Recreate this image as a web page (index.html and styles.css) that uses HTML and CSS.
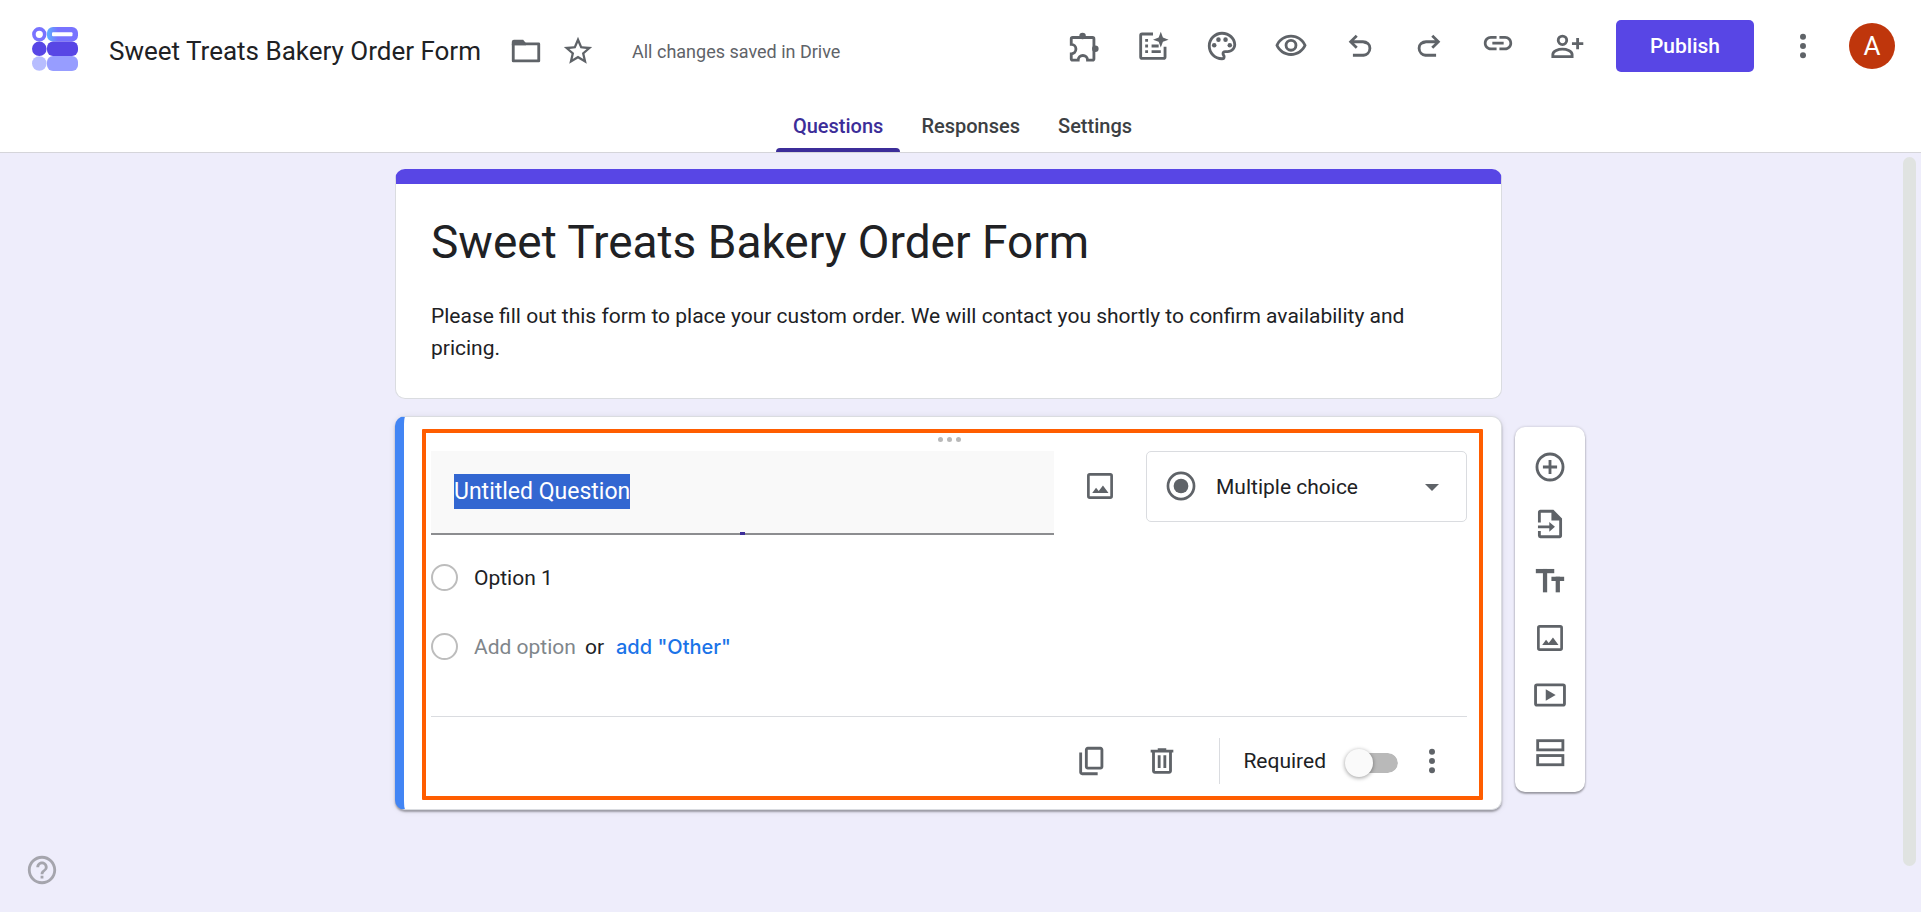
FILE: index.html
```html
<!DOCTYPE html>
<html lang="en">
<head>
    <meta charset="UTF-8">
    <meta name="viewport" content="width=device-width, initial-scale=1.0">
    <title>Sweet Treats Bakery Order Form</title>
    <link rel="stylesheet" href="styles.css">
</head>
<body>
    <header class="header">
        <div class="top-bar">
            <div class="file-info">
                <a href="#" class="logo" aria-label="Forms home">
                    <svg viewBox="0 0 46 44" width="46" height="44">
                        <defs>
                            <linearGradient id="pill">
                                <stop offset="0" stop-color="#5cb3ff"/>
                                <stop offset="0.35" stop-color="#7873ff"/>
                            </linearGradient>
                        </defs>
                        <circle cx="7.3" cy="7.3" r="5.4" fill="none" stroke="#7873ff" stroke-width="3.6"/>
                        <rect x="15" width="31" height="14.5" rx="6" fill="url(#pill)"/>
                        <rect x="20" y="5.2" width="20.5" height="4" rx="1" fill="#fff"/>
                        <circle cx="7.3" cy="21.8" r="7.3" fill="#5846e5"/>
                        <rect x="15" y="14.5" width="31" height="14.5" rx="6" fill="#5846e5"/>
                        <circle cx="7.3" cy="36.5" r="7.3" fill="#b7bdff"/>
                        <rect x="15" y="29" width="31" height="15" rx="6" fill="#979dff"/>
                    </svg>
                </a>
                <span class="file-name">Sweet Treats Bakery Order Form</span>
                <button class="file-btn" aria-label="Move to folder">
                    <svg class="icon" viewBox="0 0 24 24">
                        <path d="M3 7h18v12H3z" fill="none" stroke="currentColor" stroke-width="2" stroke-linejoin="round"/>
                        <path d="M2 8V5.500A1.500 1.500 0 0 1 3.500 4H10l2 2.500V8z"/>
                    </svg>
                </button>
                <button class="file-btn" aria-label="Star">
                    <svg class="icon" viewBox="0 0 24 24"><path d="M22 9.240l-7.190-.620L12 2 9.190 8.630 2 9.240l5.460 4.730L5.820 21 12 17.270 18.180 21l-1.630-7.030L22 9.240zM12 15.400l-3.760 2.270 1-4.280-3.320-2.880 4.380-.380L12 6.100l1.710 4.040 4.380.380-3.320 2.880 1 4.280L12 15.400z"/></svg>
                </button>
                <span class="save-state">All changes saved in Drive</span>
            </div>

            <div class="actions">
                <button class="action-btn" aria-label="Add-ons">
                    <svg class="icon" viewBox="0 0 24 24">
                        <path d="M4 6h14a1 1 0 0 1 1 1v14a1 1 0 0 1-1 1h-3.500a3.300 3.300 0 0 0-6.600 0H4a1 1 0 0 1-1-1v-3.500a3.300 3.300 0 0 0 0-6.600V7a1 1 0 0 1 1-1z" fill="none" stroke="currentColor" stroke-width="2"/>
                        <circle cx="11" cy="5" r="2.300"/><circle cx="20" cy="14" r="2.300"/>
                    </svg>
                </button>
                <button class="action-btn" aria-label="Help me create">
                    <svg class="icon" viewBox="0 0 24 24">
                        <path d="M12 3.500H4.300a1 1 0 0 0-1 1v15.200a1 1 0 0 0 1 1h15.200a1 1 0 0 0 1-1V12.500" fill="none" stroke="currentColor" stroke-width="2"/>
                        <path d="M17.500 2l1.500 4 4 1.500L19 9l-1.500 4L16 9l-4-1.500L16 6z"/>
                        <path d="M6.500 7h2v2h-2zM6.500 11h2v2h-2zM6.500 15h2v2h-2zM11 11h5v2h-5zM11 15h6.500v2H11z"/>
                    </svg>
                </button>
                <button class="action-btn" aria-label="Customize theme">
                    <svg class="icon" viewBox="0 0 24 24">
                        <path d="M12 22C6.490 22 2 17.510 2 12S6.490 2 12 2s10 4.040 10 9c0 3.310-2.690 6-6 6h-1.770c-.280 0-.5.220-.5.5 0 .120.050.230.130.330.410.470.640 1.060.640 1.670A2.500 2.500 0 0 1 12 22zm0-18c-4.410 0-8 3.590-8 8s3.590 8 8 8c.280 0 .5-.220.5-.5a.540.540 0 0 0-.140-.350c-.410-.460-.630-1.050-.630-1.650a2.500 2.500 0 0 1 2.500-2.500H16c2.210 0 4-1.790 4-4 0-3.860-3.590-7-8-7z"/>
                        <circle cx="6.500" cy="11.500" r="1.600"/><circle cx="9.500" cy="7.500" r="1.600"/><circle cx="14.500" cy="7.500" r="1.600"/><circle cx="17.500" cy="11.500" r="1.600"/>
                    </svg>
                </button>
                <button class="action-btn" aria-label="Preview">
                    <svg class="icon" viewBox="0 0 24 24">
                        <path d="M12 6c3.790 0 7.170 2.130 8.820 5.500C19.170 14.870 15.790 17 12 17s-7.170-2.130-8.820-5.500C4.830 8.130 8.210 6 12 6m0-2C7 4 2.730 7.110 1 11.500 2.730 15.890 7 19 12 19s9.270-3.110 11-7.500C21.270 7.110 17 4 12 4z"/>
                        <circle cx="12" cy="11.500" r="3.500" fill="none" stroke="currentColor" stroke-width="2"/>
                    </svg>
                </button>
                <button class="action-btn" aria-label="Undo">
                    <svg class="icon" viewBox="0 0 24 24"><path d="M7 19.500v-2h7.100q1.575 0 2.738-1T18 13.500 16.838 11 14.100 10H7.800l2.600 2.600L9 14 4 9l5-5 1.400 1.400L7.800 8h6.300q2.425 0 4.163 1.575T20 13.500t-1.737 4.300T14.100 19.500z"/></svg>
                </button>
                <button class="action-btn" aria-label="Redo">
                    <svg class="icon" viewBox="0 0 24 24"><path transform="matrix(-1 0 0 1 24 0)" d="M7 19.500v-2h7.100q1.575 0 2.738-1T18 13.500 16.838 11 14.100 10H7.800l2.600 2.600L9 14 4 9l5-5 1.400 1.400L7.800 8h6.300q2.425 0 4.163 1.575T20 13.500t-1.737 4.300T14.100 19.500z"/></svg>
                </button>
                <button class="action-btn" aria-label="Copy link">
                    <svg class="icon" viewBox="0 2 24 24"><path d="M3.900 12c0-1.710 1.390-3.100 3.100-3.100h4V7H7c-2.760 0-5 2.240-5 5s2.240 5 5 5h4v-1.900H7c-1.710 0-3.100-1.390-3.100-3.100zM8 13h8v-2H8v2zm9-6h-4v1.900h4c1.710 0 3.100 1.390 3.100 3.100s-1.390 3.100-3.100 3.100h-4V17h4c2.760 0 5-2.240 5-5s-2.240-5-5-5z"/></svg>
                </button>
                <button class="action-btn" aria-label="Add collaborators">
                    <svg class="icon" viewBox="0 0 24 24">
                        <g fill="none" stroke="currentColor" stroke-width="2">
                            <circle cx="8.800" cy="8" r="3"/>
                            <path d="M2 19.500V18c0-2.500 4-3.800 6.800-3.800s6.800 1.300 6.800 3.800v1.500z"/>
                            <path d="M19.500 6.300v8M15.500 10.300h8"/>
                        </g>
                    </svg>
                </button>
                <button class="publish-btn">Publish</button>
                <button class="more-btn" aria-label="More">
                    <svg class="icon" viewBox="0 0 24 24"><circle cx="12" cy="5.500" r="2.100"/><circle cx="12" cy="12" r="2.100"/><circle cx="12" cy="18.500" r="2.100"/></svg>
                </button>
                <button class="avatar" aria-label="Account">A</button>
            </div>
        </div>

        <nav class="tabs">
            <a href="#questions" class="tab active">Questions</a>
            <a href="#responses" class="tab">Responses</a>
            <a href="#settings" class="tab">Settings</a>
        </nav>
    </header>

    <main class="editor">
        <section class="title-card">
            <h1>Sweet Treats Bakery Order Form</h1>
            <p>Please fill out this form to place your custom order. We will contact you shortly to confirm availability and pricing.</p>
        </section>

        <section class="question-card">
            <div class="drag-handle"><i></i><i></i><i></i></div>

            <div class="question-row">
                <div class="question-field">
                    <textarea id="question" rows="1" aria-label="Question" spellcheck="false">Untitled Question</textarea>
                </div>
                <button class="image-btn" aria-label="Add image">
                    <svg class="icon" viewBox="0 0 24 24">
                        <rect x="3.800" y="3.800" width="16.400" height="16.400" rx="1" fill="none" stroke="currentColor" stroke-width="1.900"/>
                        <path d="M6.500 17l2.700-3.800 1.900 2.400 3-4 3.900 5.400z"/>
                    </svg>
                </button>
                <div class="type-select">
                    <svg class="icon type-icon" viewBox="0 0 24 24">
                        <circle cx="12" cy="12" r="9.200" fill="none" stroke="currentColor" stroke-width="1.900"/>
                        <circle cx="12" cy="12" r="5.200"/>
                    </svg>
                    <select aria-label="Question type">
                        <option>Multiple choice</option>
                        <option>Checkboxes</option>
                        <option>Dropdown</option>
                    </select>
                    <svg class="arrow" viewBox="0 0 14 7" width="14" height="7"><path d="M0 0h14L7 7z"/></svg>
                </div>
            </div>

            <div class="option">
                <input type="radio" name="option" id="opt1" disabled>
                <label for="opt1">Option 1</label>
            </div>
            <div class="option">
                <input type="radio" name="option" aria-label="New option" disabled>
                <button class="add-option">Add option</button>
                <span class="or">or</span>
                <button class="add-other">add "Other"</button>
            </div>

            <div class="question-footer">
                <button class="foot-btn" aria-label="Duplicate">
                    <svg class="icon" viewBox="0 0 24 24"><path d="M9 18q-.825 0-1.412-.587T7 16V4q0-.825.587-1.412T9 2h9q.825 0 1.413.588T20 4v12q0 .825-.587 1.413T18 18zm0-2h9V4H9zm-4 6q-.825 0-1.412-.587T3 20V6h2v14h11v2z"/></svg>
                </button>
                <button class="foot-btn" aria-label="Delete">
                    <svg class="icon" viewBox="0 0 24 24"><path d="M7 21q-.825 0-1.412-.587T5 19V6H4V4h5V3h6v1h5v2h-1v13q0 .825-.587 1.413T17 21zM17 6H7v13h10zM9 17h2V8H9zm4 0h2V8h-2z" fill-rule="evenodd"/></svg>
                </button>
                <span class="separator"></span>
                <label for="required">Required</label>
                <input type="checkbox" class="toggle" id="required">
                <button class="foot-more" aria-label="More options">
                    <svg class="icon" viewBox="0 0 24 24"><circle cx="12" cy="5.500" r="2.100"/><circle cx="12" cy="12" r="2.100"/><circle cx="12" cy="18.500" r="2.100"/></svg>
                </button>
            </div>

            <div class="highlight"></div>
        </section>

        <aside class="toolbar">
            <button aria-label="Add question">
                <svg class="icon" viewBox="0 0 24 24"><g fill="none" stroke="currentColor" stroke-width="2"><circle cx="12" cy="12" r="9.200"/><path d="M12 7v10M7 12h10"/></g></svg>
            </button>
            <button aria-label="Import questions">
                <svg class="icon" viewBox="0 0 24 24">
                    <path d="M4.500 11V3.700a.7.7 0 0 1 .7-.7H14l5.500 5.500v11.800a.7.7 0 0 1-.7.7H5.200a.7.7 0 0 1-.7-.7V17" fill="none" stroke="currentColor" stroke-width="2"/>
                    <path d="M13 2.500V9.500h7zM3.500 13h8v-2.500l4 3.500-4 3.500V15h-8z"/>
                </svg>
            </button>
            <button aria-label="Add title and description">
                <svg class="icon" viewBox="0 0 24 24"><rect x="2" y="3.500" width="13" height="3"/><rect x="7" y="3.500" width="3" height="16.500"/><rect x="13" y="9" width="9" height="3"/><rect x="16" y="9" width="3" height="11"/></svg>
            </button>
            <button aria-label="Add image">
                <svg class="icon" viewBox="0 0 24 24">
                    <rect x="3.800" y="3.800" width="16.400" height="16.400" rx="1" fill="none" stroke="currentColor" stroke-width="1.900"/>
                    <path d="M6.500 17l2.700-3.800 1.900 2.400 3-4 3.900 5.400z"/>
                </svg>
            </button>
            <button aria-label="Add video">
                <svg class="icon" viewBox="0 0 24 24">
                    <rect x="1.800" y="4.800" width="20.400" height="14.400" rx="1" fill="none" stroke="currentColor" stroke-width="2"/>
                    <path d="M9 8v8l7-4z"/>
                </svg>
            </button>
            <button aria-label="Add section">
                <svg class="icon" viewBox="0 0 24 24"><g fill="none" stroke="currentColor" stroke-width="2"><rect x="3.300" y="4" width="17.800" height="6.500"/><rect x="3.300" y="14.500" width="17.800" height="6.500"/></g></svg>
            </button>
        </aside>
    </main>

    <button class="help" aria-label="Help">
        <svg class="icon" viewBox="0 0 24 24"><path d="M11 18h2v-2h-2v2zm1-16C6.480 2 2 6.480 2 12s4.480 10 10 10 10-4.480 10-10S17.520 2 12 2zm0 18c-4.410 0-8-3.590-8-8s3.590-8 8-8 8 3.590 8 8-3.590 8-8 8zm0-14c-2.210 0-4 1.790-4 4h2c0-1.100.9-2 2-2s2 .9 2 2c0 2-3 1.750-3 5h2c0-2.250 3-2.500 3-5 0-2.210-1.790-4-4-4z"/></svg>
    </button>
    <div class="scroll-thumb"></div>

    <script>
        var question = document.getElementById('question');
        question.focus();
        question.select();
    </script>
</body>
</html>
```
FILE: styles.css
```css
* {
    box-sizing: border-box;
}

body {
    margin: 0;
    min-height: 100vh;
    background: #eeedfb;
    color: #202124;
    font-family: Roboto, "Liberation Sans", sans-serif;
    font-size: 21px;
}

button {
    display: flex;
    align-items: center;
    justify-content: center;
    padding: 0;
    border: 0;
    background: none;
    color: #5f6368;
    font: inherit;
    cursor: pointer;
}

.icon {
    display: block;
    width: 34px;
    height: 34px;
    fill: currentColor;
}

/* header */

.header {
    background: #fff;
    border-bottom: 1px solid #d5d5da;
}

.top-bar {
    display: flex;
    justify-content: space-between;
    height: 102px;
    padding: 0 26px 0 32px;
}

.file-info, .actions {
    display: flex;
    align-items: center;
}

.logo {
    margin: 0 31px 4px 0;
}

.logo svg {
    display: block;
}

.file-name {
    margin-right: 19px;
    font-size: 26px;
}

.file-btn {
    width: 52px;
    height: 52px;
}

.save-state {
    margin-left: 28px;
    font-size: 18px;
    color: #5f6368;
}

.actions {
    height: 92px;
}

.action-btn {
    width: 69px;
    height: 52px;
}

.publish-btn {
    width: 138px;
    height: 52px;
    margin-left: 15px;
    border-radius: 5px;
    background: #5846e5;
    color: #fff;
    font-weight: 500;
}

.more-btn {
    width: 48px;
    height: 48px;
    margin: 0 22px 0 25px;
}

.avatar {
    width: 46px;
    height: 46px;
    border-radius: 50%;
    background: #bf360c;
    color: #fff;
    font-size: 26px;
}

.tabs {
    display: flex;
    justify-content: center;
    gap: 4px;
    height: 50px;
    padding-left: 4px;
}

.tab {
    padding: 12px 17px 0;
    border-bottom: 4px solid transparent;
    color: #3c4043;
    font-size: 20px;
    font-weight: 500;
    line-height: 24px;
    text-decoration: none;
}

.tab.active {
    position: relative;
    color: #3c2d99;
}

.tab.active::after {
    content: "";
    position: absolute;
    left: 0;
    right: 0;
    bottom: -4px;
    height: 4px;
    border-radius: 4px 4px 0 0;
    background: #3c2d99;
}

/* editor */

.editor {
    display: grid;
    grid-template-columns: 1fr minmax(0, 1107px) 1fr;
    align-items: start;
    row-gap: 17px;
    padding: 16px 24px 80px 0;
}

.title-card, .question-card {
    grid-column: 2;
    border: 1px solid #dadce0;
    border-radius: 10px;
    background: #fff;
}

.title-card {
    border-top: 15px solid #5846e5;
    padding: 30px 35px 34px;
}

.title-card h1 {
    margin: 0 0 30px;
    font-size: 46px;
    font-weight: 400;
    line-height: 56px;
}

.title-card p {
    margin: 0;
    line-height: 32px;
}

.question-card {
    position: relative;
    border-left: 9px solid #4285f4;
    padding: 20px 34px 4px 27px;
    box-shadow: 0 2px 2px rgba(0, 0, 0, 0.3), 0 1px 6px rgba(0, 0, 0, 0.1);
}

.drag-handle {
    display: flex;
    justify-content: center;
    gap: 4px;
    height: 14px;
}

.drag-handle i {
    width: 5px;
    height: 5px;
    border-radius: 50%;
    background: #b8b8b8;
}

.question-row {
    display: flex;
    align-items: flex-start;
    margin-bottom: 8px;
}

.question-field {
    position: relative;
    flex: 1;
    height: 84px;
    padding: 23px;
    border-bottom: 2px solid #8c8d90;
    background: #f9f9f9;
}

/* focus line growing from the middle of the field */
.question-field::after {
    content: "";
    position: absolute;
    left: 50%;
    bottom: -2px;
    width: 5px;
    height: 3px;
    margin-left: -3px;
    background: #3c2d99;
}

.question-field textarea {
    display: block;
    width: 100%;
    height: 35px;
    padding: 0;
    border: 0;
    outline: 0;
    resize: none;
    overflow: hidden;
    background: none;
    color: #202124;
    font: inherit;
    font-size: 23px;
    line-height: 35px;
}

.question-field textarea::selection {
    background: #3367d1;
    color: #fff;
}

.image-btn {
    width: 92px;
    height: 70px;
}

.type-select {
    position: relative;
    width: 321px;
    color: #5f6368;
}

.type-select select {
    display: block;
    width: 100%;
    height: 71px;
    padding: 0 60px 0 69px;
    border: 1px solid #dadce0;
    border-radius: 5px;
    appearance: none;
    background: #fff;
    color: #202124;
    font: inherit;
}

.type-icon {
    position: absolute;
    left: 18px;
    top: 18px;
    pointer-events: none;
}

.arrow {
    position: absolute;
    right: 28px;
    top: 33px;
    fill: #5f6368;
    pointer-events: none;
}

.option {
    display: flex;
    align-items: center;
    height: 69px;
}

.option input {
    width: 27px;
    height: 27px;
    margin: 0 16px 0 0;
    border: 2px solid #bdbdbd;
    border-radius: 50%;
    appearance: none;
}

.add-option {
    color: #80868b;
}

.or {
    margin: 0 12px 0 9px;
}

.add-other {
    color: #1a73e8;
    font-family: Inter, Roboto, sans-serif;
    font-size: 20px;
    font-weight: 500;
}

.question-footer {
    display: flex;
    align-items: center;
    justify-content: flex-end;
    height: 89px;
    margin-top: 35px;
    border-top: 1px solid #dadce0;
}

.foot-btn {
    width: 70px;
    height: 52px;
}

.separator {
    width: 1px;
    height: 46px;
    margin: 0 23px 0 22px;
    background: #dadce0;
}

.toggle {
    position: relative;
    width: 53px;
    height: 20px;
    margin: 4px 9px 0 19px;
    border-left: 8px solid transparent;
    border-radius: 10px;
    appearance: none;
    background: #b9b9b9;
    background-clip: padding-box;
}

.toggle::before {
    content: "";
    position: absolute;
    left: -8px;
    top: -4px;
    width: 28px;
    height: 28px;
    border-radius: 50%;
    background: #fafafa;
    box-shadow: 0 1px 4px rgba(0, 0, 0, 0.4);
}

.foot-more {
    width: 50px;
    height: 50px;
    margin-right: 10px;
}

.highlight {
    position: absolute;
    inset: 12px 18px 9px 18px;
    border: 4px solid #ff5d00;
    border-radius: 1px;
    pointer-events: none;
}

.toolbar {
    grid-column: 3;
    grid-row: 2;
    display: flex;
    flex-direction: column;
    align-items: center;
    gap: 5px;
    width: 70px;
    margin: 11px 0 0 13px;
    padding: 14px 0;
    border-radius: 10px;
    background: #fff;
    box-shadow: 0 2px 2px rgba(0, 0, 0, 0.3), 0 0 3px rgba(0, 0, 0, 0.2);
}

.toolbar button {
    width: 52px;
    height: 52px;
}

.help {
    position: fixed;
    left: 25px;
    bottom: 25px;
    color: #a5a5ad;
}

.scroll-thumb {
    position: fixed;
    top: 157px;
    right: 5px;
    bottom: 46px;
    width: 13px;
    border-radius: 7px;
    background: #e0e3e1;
}
```
